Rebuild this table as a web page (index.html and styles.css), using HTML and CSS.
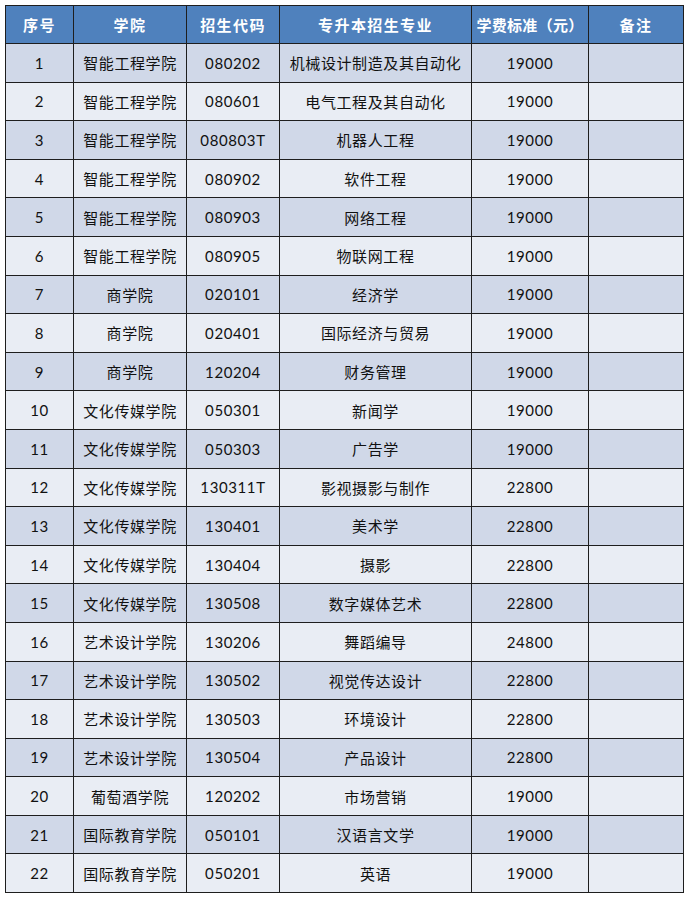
FILE: index.html
```html
<!DOCTYPE html>
<html lang="zh">
<head>
<meta charset="utf-8">
<title>专升本招生专业</title>
<link rel="stylesheet" href="styles.css">
</head>
<body>
<table class="fees">
<colgroup>
<col class="c1"><col class="c2"><col class="c3"><col class="c4"><col class="c5"><col class="c6">
</colgroup>
<thead>
<tr><th>序号</th><th>学院</th><th>招生代码</th><th>专升本招生专业</th><th class="narrow">学费标准（元）</th><th>备注</th></tr>
</thead>
<tbody>
<tr><td>1</td><td>智能工程学院</td><td>080202</td><td>机械设计制造及其自动化</td><td>19000</td><td></td></tr>
<tr><td>2</td><td>智能工程学院</td><td>080601</td><td>电气工程及其自动化</td><td>19000</td><td></td></tr>
<tr><td>3</td><td>智能工程学院</td><td>080803T</td><td>机器人工程</td><td>19000</td><td></td></tr>
<tr><td>4</td><td>智能工程学院</td><td>080902</td><td>软件工程</td><td>19000</td><td></td></tr>
<tr><td>5</td><td>智能工程学院</td><td>080903</td><td>网络工程</td><td>19000</td><td></td></tr>
<tr><td>6</td><td>智能工程学院</td><td>080905</td><td>物联网工程</td><td>19000</td><td></td></tr>
<tr><td>7</td><td>商学院</td><td>020101</td><td>经济学</td><td>19000</td><td></td></tr>
<tr><td>8</td><td>商学院</td><td>020401</td><td>国际经济与贸易</td><td>19000</td><td></td></tr>
<tr><td>9</td><td>商学院</td><td>120204</td><td>财务管理</td><td>19000</td><td></td></tr>
<tr><td>10</td><td>文化传媒学院</td><td>050301</td><td>新闻学</td><td>19000</td><td></td></tr>
<tr><td>11</td><td>文化传媒学院</td><td>050303</td><td>广告学</td><td>19000</td><td></td></tr>
<tr><td>12</td><td>文化传媒学院</td><td>130311T</td><td>影视摄影与制作</td><td>22800</td><td></td></tr>
<tr><td>13</td><td>文化传媒学院</td><td>130401</td><td>美术学</td><td>22800</td><td></td></tr>
<tr><td>14</td><td>文化传媒学院</td><td>130404</td><td>摄影</td><td>22800</td><td></td></tr>
<tr><td>15</td><td>文化传媒学院</td><td>130508</td><td>数字媒体艺术</td><td>22800</td><td></td></tr>
<tr><td>16</td><td>艺术设计学院</td><td>130206</td><td>舞蹈编导</td><td>24800</td><td></td></tr>
<tr><td>17</td><td>艺术设计学院</td><td>130502</td><td>视觉传达设计</td><td>22800</td><td></td></tr>
<tr><td>18</td><td>艺术设计学院</td><td>130503</td><td>环境设计</td><td>22800</td><td></td></tr>
<tr><td>19</td><td>艺术设计学院</td><td>130504</td><td>产品设计</td><td>22800</td><td></td></tr>
<tr><td>20</td><td>葡萄酒学院</td><td>120202</td><td>市场营销</td><td>19000</td><td></td></tr>
<tr><td>21</td><td>国际教育学院</td><td>050101</td><td>汉语言文学</td><td>19000</td><td></td></tr>
<tr><td>22</td><td>国际教育学院</td><td>050201</td><td>英语</td><td>19000</td><td></td></tr>
</tbody>
</table>
</body>
</html>
```
FILE: styles.css
```css
html, body {
  margin: 0;
  padding: 0;
  background: #ffffff;
}
body {
  padding: 5px 0 0 5px;
  font-family: Lato, "Noto Sans CJK SC", sans-serif;
  color: #111;
}
.fees {
  border-collapse: collapse;
  table-layout: fixed;
  width: 678px;
}
.c1 { width: 68px; }
.c2 { width: 113px; }
.c3 { width: 93px; }
.c4 { width: 192px; }
.c5 { width: 117px; }
.c6 { width: 95px; }
.fees th, .fees td {
  border: 1px solid #1e1e1e;
  padding: 0;
  text-align: center;
  vertical-align: middle;
  white-space: nowrap;
  overflow: hidden;
}
.fees th {
  height: 37px;
  background: #4f81bd;
  color: #ffffff;
  font-size: 15px;
  font-weight: 700;
  letter-spacing: 1.4px;
}
.fees th.narrow {
  letter-spacing: 0.3px;
}
.fees td {
  height: 37.6px;
  font-size: 15px;
  letter-spacing: 0.6px;
}
.fees tbody tr:nth-child(odd) td { background: #d0d8e8; }
.fees tbody tr:nth-child(even) td { background: #e9edf4; }
```
